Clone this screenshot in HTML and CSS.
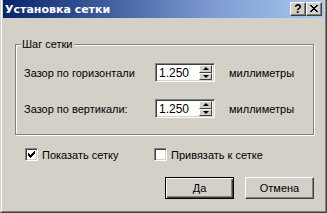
FILE: index.html
```html
<!DOCTYPE html>
<html lang="ru">
<head>
<meta charset="utf-8">
<title>Установка сетки</title>
<link rel="stylesheet" href="styles.css">
</head>
<body>
<div class="win">
  <div class="win-inner">
    <div class="titlebar">
      <span class="title">Установка сетки</span>
      <div class="caps">
        <div class="cap cap-help">?</div>
        <div class="cap cap-close">
          <svg width="8" height="7" viewBox="0 0 8 7" shape-rendering="crispEdges">
            <path d="M0 0h2v1h-2zM6 0h2v1h-2zM1 1h2v1h-2zM5 1h2v1h-2zM2 2h4v1h-4zM3 3h2v1h-2zM2 4h4v1h-4zM1 5h2v1h-2zM5 5h2v1h-2zM0 6h2v1h-2zM6 6h2v1h-2z" fill="#000"/>
          </svg>
        </div>
      </div>
    </div>
    <div class="content">
      <div class="group">
        <span class="legend">Шаг сетки</span>
        <div class="row">
          <span class="lbl">Зазор по горизонтали</span>
          <div class="edit">
            <span class="val">1.250</span>
            <div class="spin">
              <div class="sb"><i class="up"></i></div>
              <div class="sb"><i class="down"></i></div>
            </div>
          </div>
          <span class="unit">миллиметры</span>
        </div>
        <div class="row">
          <span class="lbl">Зазор по вертикали:</span>
          <div class="edit">
            <span class="val">1.250</span>
            <div class="spin">
              <div class="sb"><i class="up"></i></div>
              <div class="sb"><i class="down"></i></div>
            </div>
          </div>
          <span class="unit">миллиметры</span>
        </div>
      </div>
      <div class="checks">
        <label class="chk chk-show">
          <span class="box">
            <svg width="7" height="7" viewBox="0 0 7 7" shape-rendering="crispEdges"><path d="M6 0h1v3h-1zM5 1h1v3h-1zM4 2h1v3h-1zM3 3h1v3h-1zM2 4h1v3h-1zM1 3h1v3h-1zM0 2h1v3h-1z" fill="#000"/></svg>
          </span>
          <span>Показать сетку</span>
        </label>
        <label class="chk chk-snap">
          <span class="box"></span>
          <span>Привязать к сетке</span>
        </label>
      </div>
      <div class="buttons">
        <div class="btn btn-default"><span>Да</span></div>
        <div class="btn"><span>Отмена</span></div>
      </div>
    </div>
  </div>
</div>
</body>
</html>
```

FILE: styles.css
```css
html, body {
  margin: 0;
  padding: 0;
  background: #d4d0c8;
}
body {
  width: 327px;
  height: 213px;
  overflow: hidden;
  font-family: "Liberation Sans", Arial, sans-serif;
  font-size: 11px;
  color: #000;
}
.win {
  width: 327px;
  height: 213px;
  box-sizing: border-box;
  border-left: 1px solid #d4d0c8;
  border-right: 1px solid #404040;
  border-bottom: 1px solid #404040;
}
.win-inner {
  height: 100%;
  box-sizing: border-box;
  border-left: 1px solid #fff;
  border-right: 1px solid #808080;
  border-bottom: 1px solid #808080;
  padding: 0 1px 1px 1px;
  display: flex;
  flex-direction: column;
}
.titlebar {
  height: 18px;
  flex: none;
  display: flex;
  align-items: center;
  background: linear-gradient(to right, #0a246a 0%, #3a5a9a 30%, #7d9bd0 65%, #a6caf0 100%);
  padding: 0 2px 0 2px;
}
.title {
  color: #fff;
  font-weight: bold;
  font-size: 11px;
  font-family: "DejaVu Sans", Verdana, sans-serif;
  letter-spacing: 0;
}
.caps {
  margin-left: auto;
  display: flex;
}
.cap {
  width: 16px;
  height: 14px;
  box-sizing: border-box;
  background: #d4d0c8;
  border-top: 1px solid #fff;
  border-left: 1px solid #fff;
  border-right: 1px solid #404040;
  border-bottom: 1px solid #404040;
  box-shadow: inset -1px -1px 0 #808080;
  display: flex;
  align-items: center;
  justify-content: center;
}
.cap-help {
  font-family: "Liberation Sans", Arial, sans-serif;
  font-weight: bold;
  font-size: 12px;
  line-height: 1;
  margin-right: 0;
}
.cap-close svg {
  display: block;
  margin: 0 1px 1px 0;
}
.content {
  flex: 1;
  padding: 26px 9px 0 12px;
}
.group {
  position: relative;
  height: 91px;
  box-sizing: border-box;
  border: 1px solid #808080;
  box-shadow: inset 1px 1px 0 #fff, 1px 1px 0 #fff;
  padding: 18px 0 0 8px;
  display: flex;
  flex-direction: column;
  gap: 17px;
  margin-right: 1px;
}
.legend {
  position: absolute;
  top: -7px;
  left: 5px;
  padding: 0 1px;
  background: #d4d0c8;
  line-height: 13px;
}
.row {
  display: flex;
  align-items: center;
  height: 19px;
}
.lbl {
  width: 131px;
}
.edit {
  width: 60px;
  height: 19px;
  box-sizing: border-box;
  background: #fff;
  border-top: 1px solid #808080;
  border-left: 1px solid #808080;
  border-right: 1px solid #fff;
  border-bottom: 1px solid #fff;
  box-shadow: inset 1px 1px 0 #404040, inset -1px -1px 0 #d4d0c8;
  display: flex;
  align-items: center;
  padding: 2px 2px 2px 3px;
}
.val {
  flex: 1;
  font-size: 12px;
}
.spin {
  width: 13px;
  height: 15px;
  display: flex;
  flex-direction: column;
}
.sb {
  flex: 1;
  box-sizing: border-box;
  background: #d4d0c8;
  border-top: 1px solid #fff;
  border-left: 1px solid #fff;
  border-right: 1px solid #404040;
  border-bottom: 1px solid #404040;
  display: flex;
  align-items: center;
  justify-content: center;
}
.sb i {
  display: block;
  width: 0;
  height: 0;
  border-left: 3px solid transparent;
  border-right: 3px solid transparent;
}
.sb .up { border-bottom: 3px solid #000; }
.sb .down { border-top: 3px solid #000; }
.unit {
  margin-left: 14px;
}
.checks {
  display: flex;
  margin-top: 13px;
  padding-left: 10px;
}
.chk {
  display: flex;
  align-items: center;
  gap: 4px;
  height: 13px;
}
.chk-show {
  width: 129px;
}
.box {
  width: 13px;
  height: 13px;
  box-sizing: border-box;
  background: #fff;
  border-top: 1px solid #808080;
  border-left: 1px solid #808080;
  border-right: 1px solid #fff;
  border-bottom: 1px solid #fff;
  box-shadow: inset 1px 1px 0 #404040, inset -1px -1px 0 #d4d0c8;
  display: flex;
  align-items: center;
  justify-content: center;
}
.box svg { display: block; }
.buttons {
  display: flex;
  justify-content: flex-end;
  gap: 11px;
  margin-top: 16px;
  padding-right: 1px;
}
.btn {
  width: 69px;
  height: 22px;
  box-sizing: border-box;
  background: #d4d0c8;
  border-top: 1px solid #fff;
  border-left: 1px solid #fff;
  border-right: 1px solid #404040;
  border-bottom: 1px solid #404040;
  box-shadow: inset -1px -1px 0 #808080;
  display: flex;
  align-items: center;
  justify-content: center;
}
.btn-default {
  border: 1px solid #000;
  box-shadow: inset 1px 1px 0 #fff, inset -1px -1px 0 #404040, inset -2px -2px 0 #808080;
}
```
